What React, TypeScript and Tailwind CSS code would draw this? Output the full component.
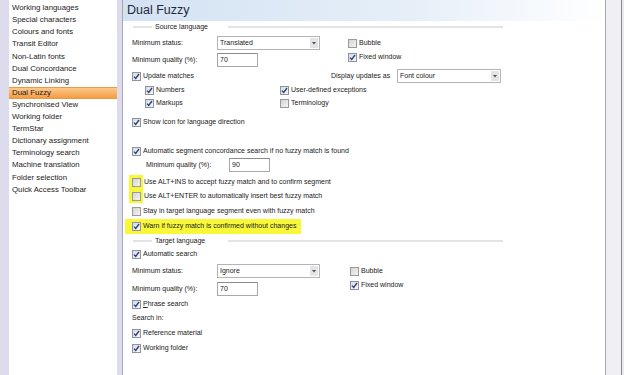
import React from 'react';

const font = { fontFamily: '"Liberation Sans", Arial, sans-serif' };

const navItems = [
  'Working languages',
  'Special characters',
  'Colours and fonts',
  'Transit Editor',
  'Non-Latin fonts',
  'Dual Concordance',
  'Dynamic Linking',
  'Dual Fuzzy',
  'Synchronised View',
  'Working folder',
  'TermStar',
  'Dictionary assignment',
  'Terminology search',
  'Machine translation',
  'Folder selection',
  'Quick Access Toolbar',
];

function Check({ checked }: { checked?: boolean }) {
  return (
    <span
      className={`flex h-[9px] w-[9px] shrink-0 items-center justify-center border ${
        checked
          ? 'border-[#8d93a3] bg-gradient-to-br from-[#d6dce8] to-[#f2f4f8]'
          : 'border-[#9a9a9a] bg-gradient-to-br from-[#d4d4d4] to-[#f4f4f4]'
      }`}
    >
      {checked && (
        <svg width="7" height="7" viewBox="0 0 7 7">
          <path d="M1 3.6 L2.7 5.4 L6 1" fill="none" stroke="#2c3f68" strokeWidth="1.3" />
        </svg>
      )}
    </span>
  );
}

function CheckItem({ label, checked, className = '' }: { label: React.ReactNode; checked?: boolean; className?: string }) {
  return (
    <div className={`flex items-center gap-[2px] ${className}`}>
      <Check checked={checked} />
      <span>{label}</span>
    </div>
  );
}

function Select({ value, className = '' }: { value: string; className?: string }) {
  return (
    <div className={`flex h-[14px] items-center justify-between border border-[#b4b4b4] bg-white pl-[2px] pr-[1px] ${className}`}>
      <span>{value}</span>
      <span className="flex h-[10px] w-[8px] items-center justify-center bg-[#e3e4e8]">
        <svg width="4" height="3" viewBox="0 0 4 3">
          <path d="M0 0 L4 0 L2 2.5 Z" fill="#505050" />
        </svg>
      </span>
    </div>
  );
}

function Input({ value, className = '' }: { value: string; className?: string }) {
  return (
    <div className={`flex h-[14px] items-start border border-[#a8a8a8] border-t-[#8c8c8c] bg-white px-[2px] pt-[1px] ${className}`}>
      {value}
    </div>
  );
}

function GroupTitle({ label }: { label: string }) {
  return (
    <div className="flex h-[12px] items-center">
      <div className="ml-[10px] h-[2px] w-[19px] bg-[#e3e3e3]" />
      <span className="w-[76px] pl-[3px]">{label}</span>
      <div className="h-[2px] w-[275px] bg-[#e3e3e3]" />
    </div>
  );
}

export default function App() {
  return (
    <div style={font} className="flex h-[375px] w-[624px] overflow-hidden whitespace-nowrap bg-[#dcdcec] text-[#222]">
      {/* options tree */}
      <div className="ml-[9px] w-[108px] shrink-0 bg-white pt-[2px] text-[7.8px]">
        {navItems.map((item) => (
          <div
            key={item}
            className={`flex h-[12.1px] items-center pl-[3px] ${
              item === 'Dual Fuzzy'
                ? 'border-y border-[#e99a45] bg-gradient-to-b from-[#fcc98a] to-[#f39c40]'
                : ''
            }`}
          >
            {item}
          </div>
        ))}
      </div>

      {/* settings page */}
      <div className="ml-[5px] flex w-[484px] shrink-0 flex-col border-x border-[#a7a7b4] bg-white text-[7px]">
        <div className="flex h-[21px] items-start bg-gradient-to-r from-[#d3e2f3] via-[#e6eff8] via-60% to-white pl-[4px] pt-[1px] text-[12.5px] text-[#1e2a3a]">
          Dual Fuzzy
        </div>

        <GroupTitle label="Source language" />

        <div className="flex pl-[9px] pt-[3px]">
          <div className="flex flex-col gap-[3px]">
            <div className="flex h-[14px] items-center">
              <span className="w-[85px]">Minimum status:</span>
              <Select value="Translated" className="w-[103px]" />
            </div>
            <div className="flex h-[14px] items-center">
              <span className="w-[85px]">Minimum quality (%):</span>
              <Input value="70" className="w-[41px]" />
            </div>
          </div>
          <div className="ml-[28px] flex flex-col">
            <CheckItem label="Bubble" className="h-[14px]" />
            <CheckItem label="Fixed window" checked className="h-[14px]" />
          </div>
        </div>

        <div className="mt-[2px] flex h-[14px] items-center pl-[9px]">
          <CheckItem label="Update matches" checked className="w-[199px]" />
          <span className="w-[66px]">Display updates as</span>
          <Select value="Font colour" className="w-[104px]" />
        </div>

        <div className="mt-[1px] flex h-[13px] items-center pl-[22px]">
          <CheckItem label="Numbers" checked className="w-[135px]" />
          <CheckItem label="User-defined exceptions" checked />
        </div>
        <div className="flex h-[13px] items-center pl-[22px]">
          <CheckItem label="Markups" checked className="w-[135px]" />
          <CheckItem label="Terminology" />
        </div>

        <CheckItem label="Show icon for language direction" checked className="mt-[5px] h-[14px] pl-[9px]" />

        <CheckItem
          label="Automatic segment concordance search if no fuzzy match is found"
          checked
          className="mt-[15px] h-[14px] pl-[9px]"
        />
        <div className="flex h-[14px] items-center pl-[23px]">
          <span className="w-[83px]">Minimum quality (%):</span>
          <Input value="90" className="w-[41px]" />
        </div>

        <div className="mt-[3px] ml-[6px] flex flex-col">
          <div className="flex h-[14px] items-center">
            <span className="flex h-[14px] w-[14px] items-center justify-center bg-[#f8f838]">
              <Check />
            </span>
            <span className="ml-[1px]">Use ALT+INS to accept fuzzy match and to confirm segment</span>
          </div>
          <div className="flex h-[14px] items-center">
            <span className="flex h-[14px] w-[14px] items-center justify-center bg-[#f8f838]">
              <Check />
            </span>
            <span className="ml-[1px]">Use ALT+ENTER to automatically insert best fuzzy match</span>
          </div>
        </div>

        <CheckItem
          label="Stay in target language segment even with fuzzy match"
          className="mt-[1px] h-[14px] pl-[9px]"
        />
        <div className="mt-[1px] ml-[2px] flex h-[15px] w-[176px] items-center gap-[2px] bg-[#f8f838] pl-[7px]">
          <Check checked />
          <span>Warn if fuzzy match is confirmed without changes</span>
        </div>

        <div className="mt-[1px]">
          <GroupTitle label="Target language" />
        </div>

        <CheckItem label="Automatic search" checked className="h-[14px] pl-[9px]" />

        <div className="flex pl-[9px] pt-[3px]">
          <div className="flex flex-col gap-[4px]">
            <div className="flex h-[14px] items-center">
              <span className="w-[85px]">Minimum status:</span>
              <Select value="Ignore" className="w-[103px]" />
            </div>
            <div className="flex h-[14px] items-center">
              <span className="w-[85px]">Minimum quality (%):</span>
              <Input value="70" className="w-[41px]" />
            </div>
          </div>
          <div className="ml-[30px] flex flex-col">
            <CheckItem label="Bubble" className="h-[14px]" />
            <CheckItem label="Fixed window" checked className="h-[14px]" />
          </div>
        </div>

        <CheckItem
          label={
            <>
              <span className="underline">P</span>hrase search
            </>
          }
          checked
          className="mt-[1px] h-[14px] pl-[9px]"
        />
        <div className="flex h-[14px] items-center pl-[9px]">Search in:</div>
        <CheckItem label="Reference material" checked className="mt-[1px] h-[14px] pl-[9px]" />
        <CheckItem label="Working folder" checked className="mt-[1px] h-[14px] pl-[9px]" />
      </div>

      {/* neighbouring window edge */}
      <div className="w-[15px] shrink-0 bg-[#f0f0f4]" />
      <div className="w-[1px] shrink-0 bg-[#8a8a90]" />
      <div className="flex-1 bg-[#e8e8ee]" />
    </div>
  );
}
